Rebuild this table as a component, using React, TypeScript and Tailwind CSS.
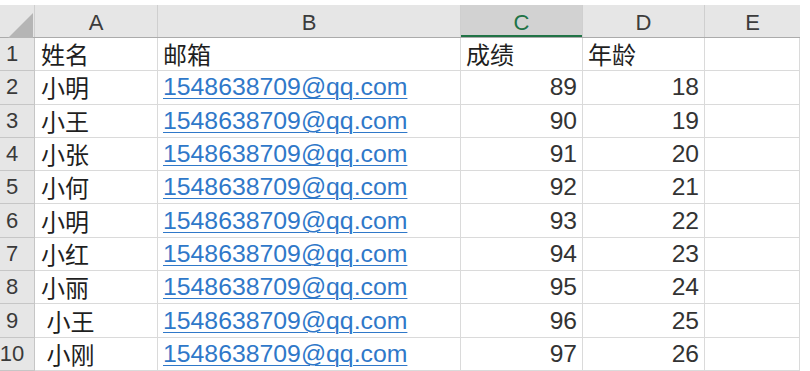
const rows = [
  { name: '小明', score: 89, age: 18 },
  { name: '小王', score: 90, age: 19 },
  { name: '小张', score: 91, age: 20 },
  { name: '小何', score: 92, age: 21 },
  { name: '小明', score: 93, age: 22 },
  { name: '小红', score: 94, age: 23 },
  { name: '小丽', score: 95, age: 24 },
  { name: ' 小王', score: 96, age: 25 },
  { name: ' 小刚', score: 97, age: 26 },
];

const cols = 'grid grid-cols-[35px_123px_303px_122px_122px_95px]';
const cjk = "font-['Noto_Sans_CJK_SC','Microsoft_YaHei',sans-serif]";
const latin = "font-['Liberation_Sans',Arial,sans-serif]";

function RowHead({ n }: { n: number }) {
  return (
    <div className="h-[33.3px] bg-[#e6e6e6] border-r border-b border-[#c6c6c6] overflow-hidden flex items-center">
      <div className={`w-[24px] flex justify-center text-[22px] leading-none text-[#3a3a3a] ${latin}`}>
        <span className="whitespace-nowrap">{n}</span>
      </div>
    </div>
  );
}

function Cell({ children, className = '' }: { children?: React.ReactNode; className?: string }) {
  return (
    <div className={`h-[33.3px] border-r border-b border-[#dadada] flex items-center whitespace-pre leading-[26px] ${className}`}>
      {children}
    </div>
  );
}

export default function App() {
  return (
    <div className="w-[810px] h-[371px] bg-white pt-[5px] overflow-hidden">
      <div className="w-[800px]">
        {/* column letters */}
        <div className={`${cols} h-[33px] bg-[#e6e6e6] border-b border-[#ababab] text-[22px] leading-none text-[#3c3c3c] ${latin}`}>
          <div className="relative border-r border-[#cfcfcf]">
            <svg className="absolute left-[8px] top-[8px]" width="25" height="25" viewBox="0 0 25 25">
              <polygon points="0,25 25,25 25,0" fill="#b5b5b5" />
            </svg>
          </div>
          <div className="flex items-center justify-center pt-[3px] border-r border-[#cfcfcf]">A</div>
          <div className="flex items-center justify-center pt-[3px] border-r border-[#cfcfcf]">B</div>
          <div className="flex items-center justify-center pt-[3px] border-r border-[#cfcfcf] bg-[#d2d2d2] text-[#217346] shadow-[inset_0_-2px_0_#217346]">C</div>
          <div className="flex items-center justify-center pt-[3px] border-r border-[#cfcfcf]">D</div>
          <div className="flex items-center justify-center pt-[3px]">E</div>
        </div>

        {/* header row */}
        <div className={`${cols} text-[24px] text-[#1f1f1f] ${cjk}`}>
          <RowHead n={1} />
          <Cell className="pl-[6px]">姓名</Cell>
          <Cell className="pl-[5px]">邮箱</Cell>
          <Cell className="pl-[5px]">成绩</Cell>
          <Cell className="pl-[5px]">年龄</Cell>
          <Cell />
        </div>

        {rows.map((r, i) => (
          <div key={i} className={cols}>
            <RowHead n={i + 2} />
            <Cell className={`pl-[6px] text-[24px] text-[#1f1f1f] ${cjk}`}>{r.name}</Cell>
            <Cell className={`pl-[5px] text-[24.8px] text-[#2f78c9] ${latin}`}>
              <span className="underline decoration-1 underline-offset-[3px]">1548638709@qq.com</span>
            </Cell>
            <Cell className={`justify-end pr-[5px] text-[24.6px] text-[#333] ${latin}`}>{r.score}</Cell>
            <Cell className={`justify-end pr-[5px] text-[24.6px] text-[#333] ${latin}`}>{r.age}</Cell>
            <Cell />
          </div>
        ))}
      </div>
    </div>
  );
}
